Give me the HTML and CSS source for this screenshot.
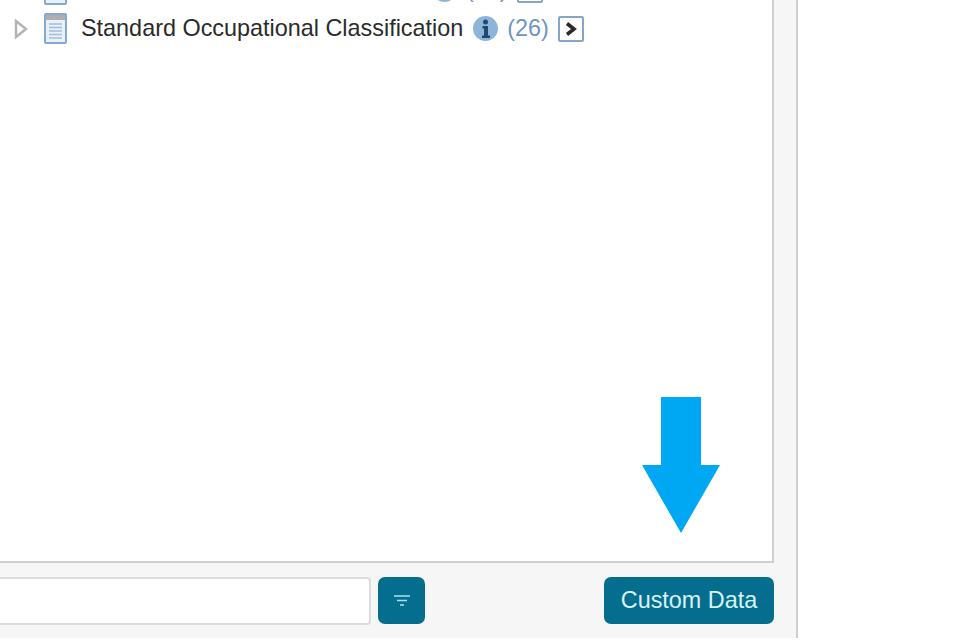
FILE: index.html
```html
<!DOCTYPE html>
<html lang="en">
<head>
  <meta charset="UTF-8" />
  <title>Custom Data</title>
  <link rel="stylesheet" href="styles.css">
</head>
<body>

<div class="panel">
  <!-- tree -->
  <div class="tree">
    <div class="row row-clipped">
      <svg class="twist" width="14" height="20" viewBox="0 0 14 20"><path d="M2 2 L12 10 L2 18 Z" fill="#fff" stroke="#b5b5b5" stroke-width="2.500"/></svg>
      <svg class="doc" width="23" height="31" viewBox="0 0 23 31"><use href="#doc-icon"/></svg>
      <span class="name name-long">&nbsp;</span>
      <svg class="info" width="25" height="25" viewBox="0 0 25 25"><use href="#info-icon"/></svg>
      <span class="count">(14)</span>
      <span class="go">&nbsp;</span>
    </div>
    <div class="row">
      <svg class="twist" width="14" height="20" viewBox="0 0 14 20"><path d="M2 2 L12 10 L2 18 Z" fill="#fff" stroke="#b5b5b5" stroke-width="2.500"/></svg>
      <svg class="doc" width="23" height="31" viewBox="0 0 23 31">
        <defs>
          <g id="doc-icon">
            <rect x="1" y="1" width="21" height="29" rx="1" fill="#e8f0fa" stroke="#86a8d2" stroke-width="2"/>
            <rect x="2" y="2" width="19" height="5" fill="#b0aeb0"/>
            <path d="M5 11h13M5 14.500h13M5 18h13M5 21.500h13M5 25h13" stroke="#a3bcdb" stroke-width="1.500"/>
          </g>
          <g id="info-icon">
            <circle cx="12.500" cy="12.500" r="12.500" fill="#8db4d9"/>
            <circle cx="12.500" cy="6" r="2.500" fill="#1f4a6e"/>
            <path d="M9.500 10h5.500v9.500h2v2.500h-8v-2.500h2v-7h-1.500z" fill="#1f4a6e"/>
          </g>
        </defs>
        <use href="#doc-icon"/>
      </svg>
      <span class="name">Standard Occupational Classification</span>
      <svg class="info" width="25" height="25" viewBox="0 0 25 25"><use href="#info-icon"/></svg>
      <span class="count">(26)</span>
      <span class="go">
        <svg width="12" height="14" viewBox="0 0 12 14"><path d="M2 1.500 L9 7 L2 12.500" fill="none" stroke="#2a2a2a" stroke-width="3.600"/></svg>
      </span>
    </div>
  </div>

  <!-- filter and button row -->
  <div class="footer">
    <input class="search" type="text">
    <button class="filter-btn">
      <svg width="16" height="11" viewBox="0 0 16 11"><path d="M0 1h16M3 5.500h10M6 10h4" stroke="#a9e3f2" stroke-width="1.700"/></svg>
    </button>
    <button class="custom-btn">Custom Data</button>
  </div>
</div>

<!-- annotation arrow -->
<svg class="arrow" width="78" height="136" viewBox="0 0 78 136"><path d="M19 0 H59 V68 H78 L39 136 L0 68 H19 Z" fill="#00a8f4"/></svg>

</body>
</html>
```

FILE: styles.css
```css
* { box-sizing: border-box; }
html, body { height: 100%; }
body {
  margin: 0;
  background: #fff;
  font-family: "Liberation Sans", Arial, sans-serif;
  overflow: hidden;
  position: relative;
}

.panel {
  width: 798px;
  height: 638px;
  background: #f6f6f6;
  border-right: 2px solid #cfcfcf;
  display: flex;
  flex-direction: column;
  overflow: hidden;
}

.tree {
  height: 563px;
  flex: none;
  margin-right: 22px;
  background: #fff;
  border-right: 2px solid #cfcfcf;
  border-bottom: 2px solid #cfcfcf;
  display: flex;
  flex-direction: column;
  justify-content: flex-start;
  overflow: hidden;
}

.row {
  display: flex;
  align-items: center;
  flex: none;
  height: 31px;
  margin-top: 14px;
  padding-left: 14px;
}

.row-clipped {
  margin-top: -26px;
  margin-bottom: -6px;
}

.twist { flex: none; margin-right: 16px; }
.doc { flex: none; margin-right: 14px; }

.name {
  font-size: 23.4px;
  color: #2b2b2b;
  white-space: nowrap;
}

.name-long { width: 341px; }

.info { flex: none; margin-left: 10px; }

.count {
  font-size: 23.4px;
  color: #6f94c4;
  margin-left: 9px;
}

.go {
  width: 26px;
  height: 26px;
  margin-left: 9px;
  border: 2px solid #86a5ca;
  border-radius: 2px;
  background: #fff;
  display: flex;
  align-items: center;
  justify-content: center;
}

.footer {
  display: flex;
  align-items: center;
  flex: 1;
  margin-right: 22px;
}

.search {
  width: 391px;
  margin-left: -20px;
  height: 48px;
  border: 2px solid #dcdcdc;
  border-radius: 4px;
  background: #fff;
}

.filter-btn {
  width: 47px;
  height: 47px;
  margin-left: 7px;
  border: none;
  border-radius: 7px;
  background: #056e8e;
  display: flex;
  align-items: center;
  justify-content: center;
  padding: 0;
}

.custom-btn {
  margin-left: auto;
  width: 170px;
  height: 47px;
  border: none;
  border-radius: 7px;
  background: #056e8e;
  color: #d8f3fa;
  font-family: inherit;
  font-size: 23.4px;
  padding: 0;
}

.arrow {
  position: absolute;
  left: 642px;
  top: 397px;
}
```
